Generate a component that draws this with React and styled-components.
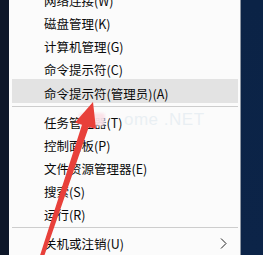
import React from "react";
import styled, { createGlobalStyle } from "styled-components";

const Global = createGlobalStyle`
  html, body { margin: 0; padding: 0; background: #0c2244; overflow: hidden; }
  body { width: 263px; height: 255px; }
`;

const Page = styled.div`
  position: relative;
  display: flex;
  width: 263px;
  height: 255px;
  overflow: hidden;
  font-family: "Noto Sans CJK SC", "Noto Sans", sans-serif;
`;

const LeftStrip = styled.div`
  width: 9px;
  background: #0e1729;
`;

const RightArea = styled.div`
  flex: 1;
  background: linear-gradient(180deg, #0b2346 0%, #0c2448 100%);
`;

const Menu = styled.div`
  width: 232px;
  background: #fbfbfb;
  border-right: 1px solid #8d96a3;
  padding: 0 2px 0 3px;
  box-sizing: border-box;
  display: flex;
  flex-direction: column;
  margin-top: -13px;
  height: 268px;
`;

const Item = styled.div`
  height: 23px;
  box-sizing: border-box;
  display: flex;
  align-items: center;
  padding: 4px 10px 0 32px;
  font-size: 12.5px;
  color: #0a0a0a;
  background: ${(p) => (p.$active ? "#e3e3e3" : "transparent")};
  ${(p) => (p.$active ? "height: 24px;" : "")}
  white-space: nowrap;
`;

const Label = styled.span`
  flex: 1;
`;

const Sep = styled.div`
  height: 6px;
  display: flex;
  align-items: center;
  &::after {
    content: "";
    flex: 1;
    height: 1px;
    background: #cdcdcd;
  }
`;

const Chevron = styled.svg`
  width: 7px;
  height: 11px;
  margin-right: 1px;
`;

const Overlay = styled.svg`
  position: absolute;
  left: 0;
  top: 0;
  width: 263px;
  height: 255px;
  pointer-events: none;
`;

const Watermark = styled.span`
  position: absolute;
  left: 124px;
  top: 110px;
  font-family: "Liberation Sans", sans-serif;
  font-size: 17px;
  color: rgba(215, 228, 236, 0.5);
  letter-spacing: 0.5px;
`;

const Smear = styled.span`
  position: absolute;
  left: 79px;
  top: 113px;
  width: 26px;
  height: 13px;
  background: rgba(250, 225, 232, 0.95);
  border-radius: 3px;
  filter: blur(1px);
`;

const top = [
  "网络连接(W)",
  "磁盘管理(K)",
  "计算机管理(G)",
  "命令提示符(C)",
];
const mid = [
  "任务管理器(T)",
  "控制面板(P)",
  "文件资源管理器(E)",
  "搜索(S)",
  "运行(R)",
];

export default function App() {
  return (
    <>
      <Global />
      <Page>
        <LeftStrip />
        <Menu>
          {top.map((t) => (
            <Item key={t}>
              <Label>{t}</Label>
            </Item>
          ))}
          <Item $active>
            <Label>命令提示符(管理员)(A)</Label>
          </Item>
          <Sep />
          {mid.map((t) => (
            <Item key={t}>
              <Label>{t}</Label>
            </Item>
          ))}
          <Sep />
          <Item>
            <Label>关机或注销(U)</Label>
            <Chevron viewBox="0 0 7 11">
              <path d="M1 0.5 L6 5.5 L1 10.5" fill="none" stroke="#222" strokeWidth="1" />
            </Chevron>
          </Item>
        </Menu>
        <RightArea />
        <Smear />
        <Watermark>ome .NET</Watermark>
        <Overlay viewBox="0 0 263 255">
          <polygon
            points="93,102 96,129 88.8,127 43.5,258 39.5,257 82,124.7 75,122.5"
            fill="#e8403a"
          />
        </Overlay>
      </Page>
    </>
  );
}
